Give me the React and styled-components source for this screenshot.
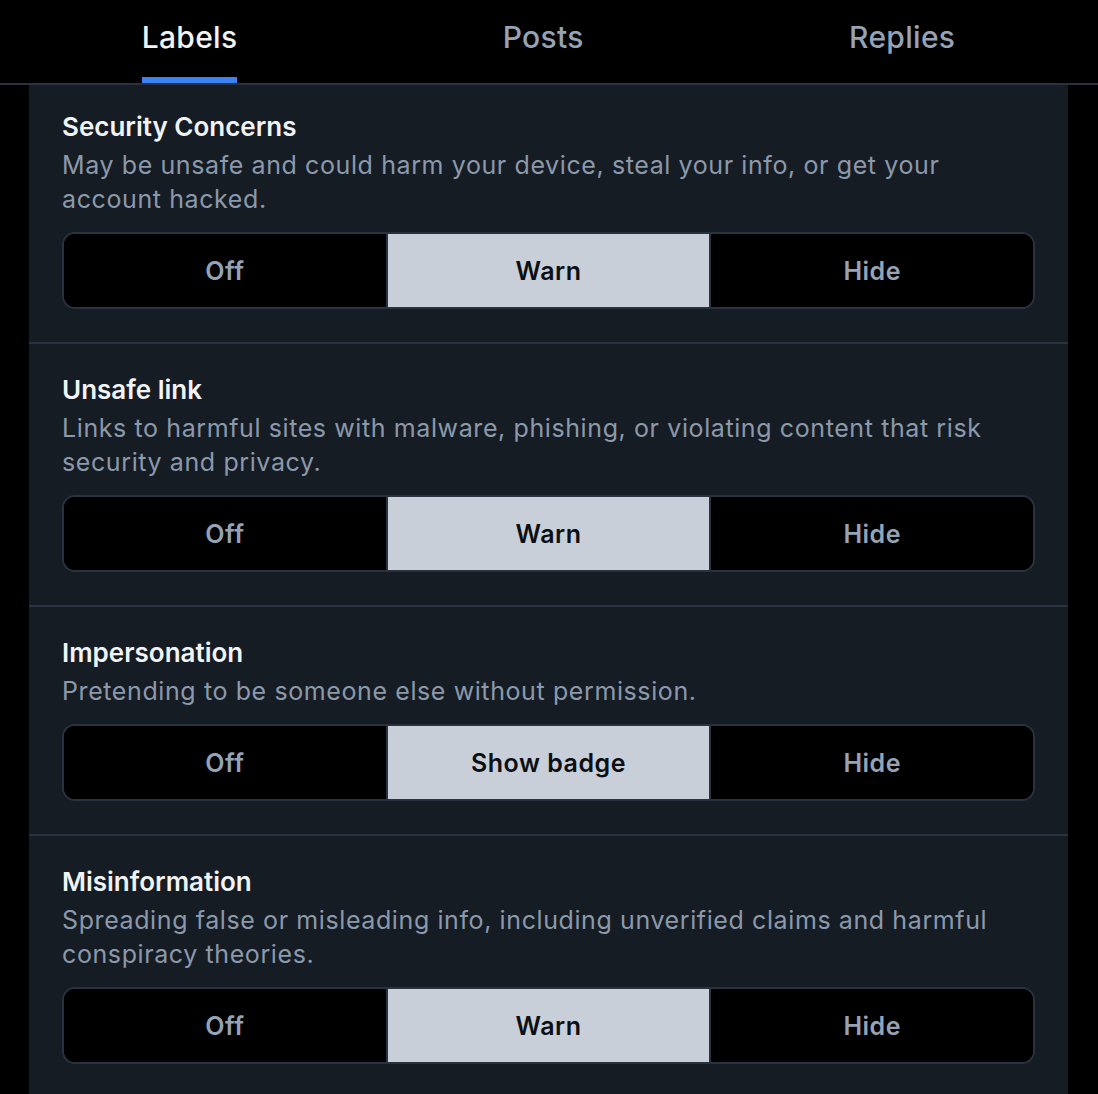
import styled, { createGlobalStyle } from "styled-components";

const Global = createGlobalStyle`
  html, body {
    margin: 0;
    padding: 0;
    background: #000;
  }
  body {
    font-family: Inter, "Noto Sans", sans-serif;
    -webkit-font-smoothing: antialiased;
  }
`;

const Page = styled.div`
  width: 1098px;
  min-height: 1094px;
  background: #000;
  display: flex;
  flex-direction: column;
`;

const TabBar = styled.div`
  display: flex;
  height: 83px;
  padding: 0 10px 0 9px;
  border-bottom: 2px solid #29323e;
`;

const Tab = styled.div`
  flex: 1 1 auto;
  display: flex;
  justify-content: center;
`;

const TabLabel = styled.div`
  position: relative;
  height: 100%;
  display: flex;
  align-items: flex-start;
  padding-top: 19px;
  box-sizing: border-box;
  font-size: 30px;
  letter-spacing: 0.3px;
  font-weight: 500;
  color: ${(p) => (p.active ? "#f1f3f5" : "#95a3b5")};

  &::after {
    content: "";
    display: ${(p) => (p.active ? "block" : "none")};
    position: absolute;
    left: 0;
    right: 0;
    bottom: 0;
    height: 6px;
    background: #3b82f2;
  }
`;

const Panel = styled.div`
  margin: 0 30px 0 29px;
  background: #161c24;
  flex: 1;
`;

const Section = styled.section`
  padding: ${(p) => (p.first ? "25px" : "29px")} 33px 33px 33px;
  border-bottom: ${(p) => (p.last ? "none" : "2px solid #29323e")};
`;

const Title = styled.h3`
  margin: 0;
  font-size: 26px;
  line-height: 34px;
  font-weight: 600;
  color: #f1f3f5;
`;

const Desc = styled.p`
  margin: 4px 0 0;
  font-size: 25px;
  letter-spacing: 0.6px;
  line-height: 34px;
  font-weight: 400;
  color: #8b99ab;
`;

const Group = styled.div`
  margin-top: 16px;
  display: flex;
  height: 77px;
  border: 2px solid #29323e;
  border-radius: 13px;
  overflow: hidden;
  box-sizing: border-box;
  background: #000;
`;

const Segment = styled.div`
  flex: 1;
  display: flex;
  align-items: center;
  justify-content: center;
  font-size: 25px;
  letter-spacing: 0.5px;
  font-weight: 600;
  color: ${(p) => (p.selected ? "#0c0f13" : "#95a3b5")};
  background: ${(p) => (p.selected ? "#c8cfd8" : "#000")};

  & + & {
    border-left: 2px solid #29323e;
  }
`;

const labels = [
  {
    title: "Security Concerns",
    desc: "May be unsafe and could harm your device, steal your info, or get your account hacked.",
    options: ["Off", "Warn", "Hide"],
  },
  {
    title: "Unsafe link",
    desc: "Links to harmful sites with malware, phishing, or violating content that risk security and privacy.",
    options: ["Off", "Warn", "Hide"],
  },
  {
    title: "Impersonation",
    desc: "Pretending to be someone else without permission.",
    options: ["Off", "Show badge", "Hide"],
  },
  {
    title: "Misinformation",
    desc: "Spreading false or misleading info, including unverified claims and harmful conspiracy theories.",
    options: ["Off", "Warn", "Hide"],
  },
];

const tabs = ["Labels", "Posts", "Replies"];

export default function App() {
  return (
    <Page>
      <Global />
      <TabBar>
        {tabs.map((t, i) => (
          <Tab key={t}>
            <TabLabel active={i === 0}>{t}</TabLabel>
          </Tab>
        ))}
      </TabBar>
      <Panel>
        {labels.map((l, i) => (
          <Section key={l.title} first={i === 0} last={i === labels.length - 1}>
            <Title>{l.title}</Title>
            <Desc>{l.desc}</Desc>
            <Group>
              {l.options.map((o, j) => (
                <Segment key={o} selected={j === 1}>
                  {o}
                </Segment>
              ))}
            </Group>
          </Section>
        ))}
      </Panel>
    </Page>
  );
}
